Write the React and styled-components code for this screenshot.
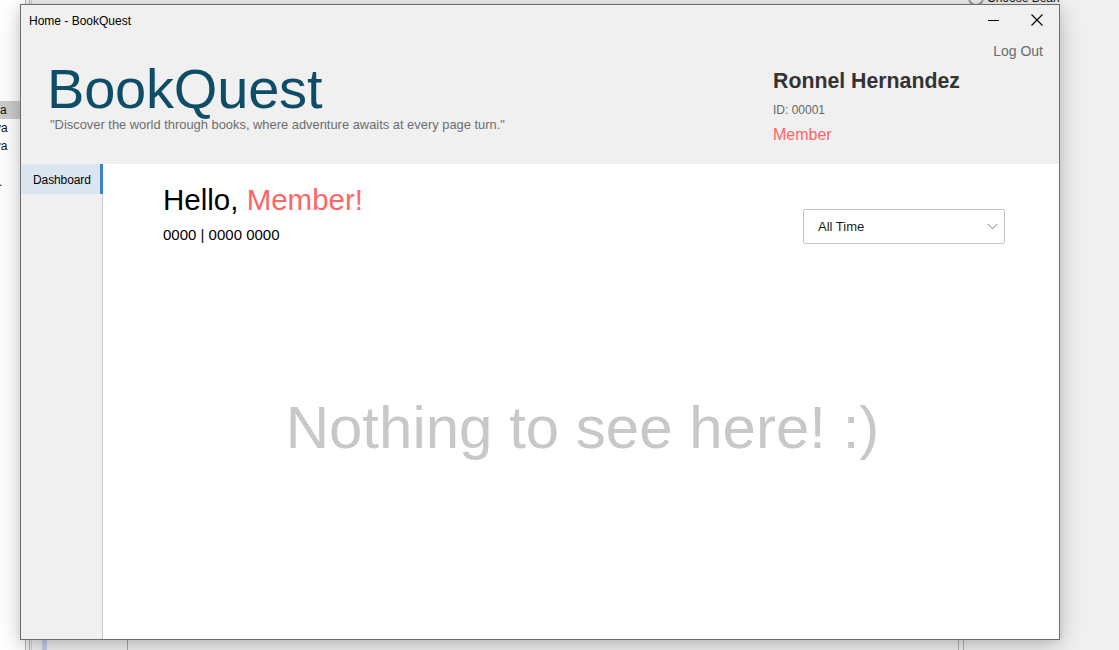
import React from "react";
import styled, { createGlobalStyle } from "styled-components";

const Global = createGlobalStyle`
  html, body { margin: 0; padding: 0; }
  body { font-family: "Liberation Sans", Arial, sans-serif; overflow: hidden; }
`;

const Desktop = styled.div`
  position: relative;
  width: 1119px;
  height: 650px;
  background: #f0f0f0;
  overflow: hidden;
`;

/* ---------- windows behind (desktop content) ---------- */
const BackLeft = styled.div`
  position: absolute;
  left: 0;
  top: 0;
  width: 26px;
  height: 650px;
  background: #ffffff;
  border-right: 1px solid #b8b8b8;
  display: flex;
  flex-direction: column;
  padding-top: 101px;
  box-sizing: border-box;
`;

const BackLine = styled.div`
  position: absolute;
  top: 0;
  left: ${(p) => p.$x}px;
  width: 1px;
  height: 650px;
  background: ${(p) => p.$c || "#b4b4b4"};
`;

const BackItem = styled.div`
  height: 18px;
  line-height: 18px;
  font-family: "Liberation Sans", Arial, sans-serif;
  font-size: 12px;
  color: #111;
  background: ${(p) => (p.$sel ? "#cccccc" : "transparent")};
  white-space: nowrap;
  text-indent: ${(p) => p.$indent}px;
  margin-top: ${(p) => p.$mt || 0}px;
`;

const BackBottom = styled.div`
  position: absolute;
  left: ${(p) => p.$x}px;
  top: 636px;
  width: ${(p) => p.$w}px;
  height: 14px;
  background: ${(p) => p.$c};
`;

const BeanLabel = styled.div`
  position: absolute;
  left: 968px;
  top: -10px;
  display: flex;
  align-items: center;
  gap: 3px;
  font-family: "Liberation Sans", Arial, sans-serif;
  font-size: 12px;
  color: #111;
`;

const BeanIcon = styled.span`
  width: 16px;
  height: 16px;
  border-radius: 50%;
  border: 2px solid #9a9a9a;
  box-sizing: border-box;
`;

/* ---------- main window ---------- */
const Window = styled.div`
  position: absolute;
  left: 20px;
  top: 4px;
  width: 1040px;
  height: 636px;
  box-sizing: border-box;
  border: 1px solid #6e6e6e;
  background: #f0f0f0;
  display: flex;
  flex-direction: column;
  box-shadow: 0 6px 22px rgba(0, 0, 0, 0.22), 0 0 8px rgba(0, 0, 0, 0.08);
`;

const TitleBar = styled.div`
  height: 32px;
  display: flex;
  align-items: center;
  justify-content: space-between;
  flex-shrink: 0;
`;

const TitleText = styled.div`
  padding-left: 8px;
  font-family: "Liberation Sans", "Segoe UI", Arial, sans-serif;
  font-size: 12px;
  color: #000;
  padding-bottom: 1px;
`;

const Controls = styled.div`
  display: flex;
  height: 100%;
`;

const CtrlButton = styled.div`
  width: 44px;
  height: 100%;
  display: flex;
  align-items: center;
  justify-content: center;
  padding-bottom: 2px;
  box-sizing: border-box;
`;

const Header = styled.div`
  height: 127px;
  flex-shrink: 0;
  display: flex;
  flex-direction: column;
`;

const LogOutRow = styled.div`
  display: flex;
  justify-content: flex-end;
  padding: 6px 16px 0 0;
`;

const LogOut = styled.div`
  font-size: 14px;
  line-height: 16px;
  color: #6b6b6b;
`;

const HeaderRow = styled.div`
  display: flex;
  justify-content: space-between;
`;

const Brand = styled.div`
  padding-left: 26px;
  padding-top: 2px;
  display: flex;
  flex-direction: column;
`;

const BrandTitle = styled.div`
  font-size: 56px;
  line-height: 56px;
  color: #0e4d68;
  letter-spacing: -0.2px;
`;

const Tagline = styled.div`
  font-size: 12.9px;
  line-height: 16px;
  color: #6d6d6d;
  padding-left: 3px;
`;

const User = styled.div`
  width: 286px;
  padding-top: 10px;
  display: flex;
  flex-direction: column;
`;

const UserName = styled.div`
  font-size: 21.3px;
  line-height: 24px;
  font-weight: bold;
  color: #333333;
`;

const UserId = styled.div`
  margin-top: 10px;
  font-size: 12px;
  line-height: 14px;
  color: #666666;
`;

const Role = styled.div`
  margin-top: 9px;
  font-size: 16px;
  line-height: 18px;
  color: #ff6666;
`;

const Body = styled.div`
  flex: 1;
  display: flex;
  min-height: 0;
`;

const Sidebar = styled.div`
  width: 81px;
  flex-shrink: 0;
  border-right: 1px solid #c8c8c8;
  background: #f0f0f0;
  display: flex;
  flex-direction: column;
`;

const NavItem = styled.div`
  height: 30px;
  display: flex;
  align-items: center;
  padding-left: 12px;
  padding-top: 2px;
  box-sizing: border-box;
  font-family: "Liberation Sans", "Segoe UI", Arial, sans-serif;
  font-size: 12px;
  letter-spacing: -0.1px;
  color: #000;
  background: ${(p) => (p.$active ? "#dce6f0" : "transparent")};
  border-right: 3px solid ${(p) => (p.$active ? "#3d84c6" : "transparent")};
  margin-right: -1px;
`;

const Main = styled.div`
  flex: 1;
  background: #ffffff;
  display: flex;
  flex-direction: column;
  padding: 19px 54px 0 60px;
  box-sizing: border-box;
`;

const TopRow = styled.div`
  display: flex;
  justify-content: space-between;
  align-items: flex-start;
`;

const Greeting = styled.div`
  display: flex;
  flex-direction: column;
`;

const Hello = styled.div`
  font-size: 29.5px;
  line-height: 34px;
  color: #000;
`;

const Accent = styled.span`
  color: #ff6666;
`;

const Numbers = styled.div`
  margin-top: 9px;
  font-size: 15px;
  line-height: 18px;
  color: #000;
`;

const Select = styled.div`
  margin-top: 26px;
  width: 202px;
  height: 35px;
  box-sizing: border-box;
  border: 1px solid #c4c4c4;
  border-radius: 2px;
  display: flex;
  align-items: center;
  justify-content: space-between;
  padding: 0 6px 0 14px;
  font-size: 13px;
  color: #1a1a1a;
`;

const Empty = styled.div`
  flex: 1;
  display: flex;
  align-items: center;
  justify-content: center;
  padding-bottom: 28px;
  margin-left: -4px;
  margin-right: -1px;
  font-size: 60px;
  color: #c8c8c8;
  white-space: nowrap;
`;

export default function App() {
  return (
    <>
      <Global />
      <Desktop>
        <BackLeft>
          <BackItem $sel $indent={0}>a</BackItem>
          <BackItem $indent={-5}>va</BackItem>
          <BackItem $indent={-12}>ava</BackItem>
          <BackItem $indent={-1} $mt={18}>.</BackItem>
        </BackLeft>
        <BackLine $x={29} />
        <BackLine $x={31} $c="#cfcfcf" />
        <BackBottom $x={42} $w={5} $c="#c9c9ee" />
        <BackBottom $x={127} $w={1} $c="#a8a8a8" />
        <BackBottom $x={958} $w={1} $c="#b0b0b0" />
        <BackBottom $x={963} $w={1} $c="#b0b0b0" />
        <BeanLabel>
          <BeanIcon />
          Choose Bean
        </BeanLabel>

        <Window>
          <TitleBar>
            <TitleText>Home - BookQuest</TitleText>
            <Controls>
              <CtrlButton>
                <svg width="11" height="11" viewBox="0 0 11 11">
                  <line x1="0" y1="5.5" x2="11" y2="5.5" stroke="#000" strokeWidth="1" />
                </svg>
              </CtrlButton>
              <CtrlButton>
                <svg width="12" height="12" viewBox="0 0 12 12">
                  <path d="M0.5 0.5 L11.5 11.5 M11.5 0.5 L0.5 11.5" stroke="#000" strokeWidth="1.1" fill="none" />
                </svg>
              </CtrlButton>
            </Controls>
          </TitleBar>

          <Header>
            <LogOutRow>
              <LogOut>Log Out</LogOut>
            </LogOutRow>
            <HeaderRow>
              <Brand>
                <BrandTitle>BookQuest</BrandTitle>
                <Tagline>
                  "Discover the world through books, where adventure awaits at every page turn."
                </Tagline>
              </Brand>
              <User>
                <UserName>Ronnel Hernandez</UserName>
                <UserId>ID: 00001</UserId>
                <Role>Member</Role>
              </User>
            </HeaderRow>
          </Header>

          <Body>
            <Sidebar>
              <NavItem $active>Dashboard</NavItem>
            </Sidebar>
            <Main>
              <TopRow>
                <Greeting>
                  <Hello>
                    Hello, <Accent>Member!</Accent>
                  </Hello>
                  <Numbers>0000 | 0000 0000</Numbers>
                </Greeting>
                <Select>
                  <span>All Time</span>
                  <svg width="11" height="7" viewBox="0 0 11 7">
                    <path d="M0.5 0.8 L5.5 5.8 L10.5 0.8" stroke="#7a7a7a" strokeWidth="1" fill="none" />
                  </svg>
                </Select>
              </TopRow>
              <Empty>Nothing to see here! :)</Empty>
            </Main>
          </Body>
        </Window>
      </Desktop>
    </>
  );
}
